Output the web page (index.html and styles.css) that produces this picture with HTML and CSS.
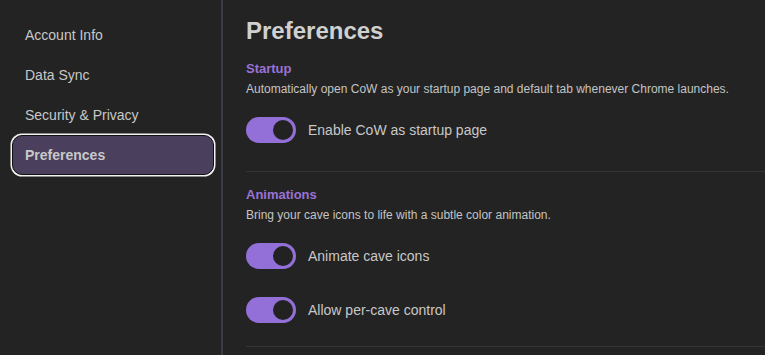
FILE: index.html
```html
<!DOCTYPE html>
<html lang="en">
<head>
  <meta charset="UTF-8">
  <meta name="viewport" content="width=device-width, initial-scale=1.0">
  <title>CoW - Settings</title>
  <link rel="stylesheet" href="styles.css">
</head>
<body>
  <div class="layout">
    <!-- Left: settings nav -->
    <nav class="sidebar">
      <a class="nav-item" href="#">Account Info</a>
      <a class="nav-item" href="#">Data Sync</a>
      <a class="nav-item" href="#">Security &amp; Privacy</a>
      <a class="nav-item active" href="#">Preferences</a>
    </nav>

    <!-- Right: preferences panel -->
    <main class="content">
      <h1>Preferences</h1>

      <section class="section">
        <h3>Startup</h3>
        <p class="desc">Automatically open CoW as your startup page and default tab whenever Chrome launches.</p>
        <label class="toggle-row">
          <input type="checkbox" checked>
          <span class="switch"></span>
          <span class="toggle-label">Enable CoW as startup page</span>
        </label>
      </section>

      <section class="section last">
        <h3>Animations</h3>
        <p class="desc">Bring your cave icons to life with a subtle color animation.</p>
        <label class="toggle-row">
          <input type="checkbox" checked>
          <span class="switch"></span>
          <span class="toggle-label">Animate cave icons</span>
        </label>
        <label class="toggle-row">
          <input type="checkbox" checked>
          <span class="switch"></span>
          <span class="toggle-label">Allow per-cave control</span>
        </label>
      </section>
    </main>
  </div>
</body>
</html>
```

FILE: styles.css
```css
html, body { height: 100%; }
body { margin: 0; background: #232323; color: #c8c8c8; font-family: Arial, "Liberation Sans", sans-serif; overflow: hidden; }
.layout { display: flex; height: 100%; }

.sidebar { width: 202px; padding: 15px 7px 0 12px; border-right: 2px solid #3c3a44; display: flex; flex-direction: column; flex-shrink: 0; }
.nav-item { display: flex; align-items: center; height: 38px; padding-left: 12px; border: 1px solid transparent; border-radius: 10px; color: #c8c8c8; text-decoration: none; font-size: 14px; }
.nav-item.active { background: #4a3f5c; border-color: #111; box-shadow: 0 0 0 1.5px #f2f2f2; font-weight: bold; }

.content { flex: 1; padding: 17px 0 0 23px; }
.content h1 { margin: 0 0 1px; font-size: 24px; line-height: 28px; color: #d0d0d0; }

.section { padding: 15px 0 28px; border-bottom: 1px solid #343434; }
.section.last { padding-bottom: 23px; }
.section h3 { margin: 0; font-size: 13px; line-height: 16px; color: #9a72d6; }
.desc { margin: 4px 0 0; font-size: 12px; line-height: 16px; color: #c4c4c4; }

.toggle-row { display: flex; align-items: center; gap: 12px; margin-top: 20px; cursor: pointer; }
.toggle-row + .toggle-row { margin-top: 28px; }
.toggle-row input { display: none; }
.switch { position: relative; width: 50px; height: 26px; border-radius: 13px; background: #555; flex-shrink: 0; }
.switch::after { content: ""; position: absolute; top: 3px; left: 3px; width: 20px; height: 20px; border-radius: 50%; background: #222; }
.toggle-row input:checked + .switch { background: #9370d8; }
.toggle-row input:checked + .switch::after { left: 27px; }
.toggle-label { font-size: 14px; color: #c8c8c8; }
```
